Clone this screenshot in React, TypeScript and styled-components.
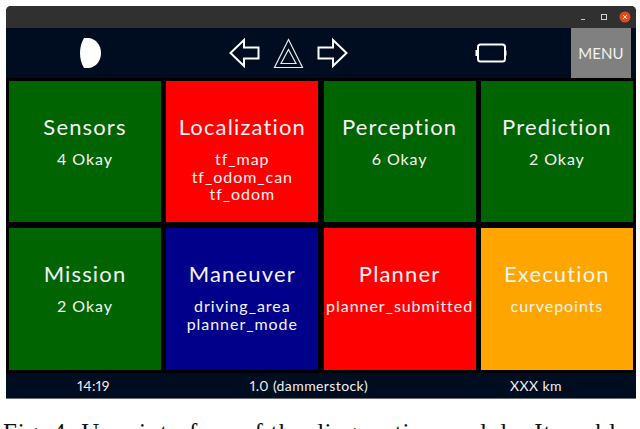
import React from 'react'
import styled, { createGlobalStyle } from 'styled-components'

const GlobalStyle = createGlobalStyle`
    html, body {
        margin: 0;
        padding: 0;
        background: #ffffff;
        overflow: hidden;
    }
`

const Page = styled.div`
    width: 640px;
    height: 429px;
    padding: 6px 4px 0 6px;
    box-sizing: border-box;
    overflow: hidden;
    font-family: 'Lato', 'Open Sans', sans-serif;
`

const Window = styled.div`
    width: 630px;
    height: 392px;
    display: flex;
    flex-direction: column;
    background: #000;
    border-radius: 5px 5px 0 0;
    border-bottom: 1px solid #6b6f78;
    overflow: hidden;
`

const TitleBar = styled.div`
    height: 22px;
    flex: none;
    display: flex;
    align-items: center;
    justify-content: flex-end;
    gap: 9px;
    padding-right: 5px;
    background: #303030;
`

const WindowControl = styled.svg`
    width: 12px;
    height: 12px;
    display: block;
`

const Header = styled.div`
    height: 50px;
    flex: none;
    display: flex;
    align-items: center;
    background: #000c20;
`

const MoonSlot = styled.div`
    width: 169px;
    display: flex;
    justify-content: center;
`

const Nav = styled.div`
    width: 119px;
    margin-left: 54px;
    display: flex;
    align-items: center;
    justify-content: space-between;
`

const BatterySlot = styled.div`
    width: 38px;
    margin-left: 124px;
    display: flex;
    justify-content: center;
`

const MenuButton = styled.div`
    width: 60px;
    height: 50px;
    margin-left: 61px;
    display: flex;
    align-items: center;
    justify-content: center;
    background: #808080;
    color: #f2f2f2;
    font-size: 15px;
    letter-spacing: 0.1px;
`

const Grid = styled.div`
    flex: 1;
    display: grid;
    grid-template-columns: repeat(4, 152px);
    grid-template-rows: 141px 142px;
    column-gap: 5.3px;
    row-gap: 6px;
    padding: 3px 0 0 3px;
`

const Card = styled.div<{ $bg: string }>`
    display: flex;
    flex-direction: column;
    align-items: center;
    padding-top: 31px;
    box-sizing: border-box;
    background: ${(props) => props.$bg};
    color: #f4f4f4;
    text-align: center;
    white-space: nowrap;
`

const CardTitle = styled.div`
    font-size: 22px;
    line-height: 30px;
    letter-spacing: 1.15px;
`

const CardLines = styled.div`
    margin-top: 8px;
    font-size: 16px;
    line-height: 17.5px;
    letter-spacing: 0.95px;
`

const Footer = styled.div`
    height: 25px;
    flex: none;
    display: flex;
    align-items: center;
    background: #000c20;
    color: #f0f0f0;
    font-size: 14px;
    letter-spacing: 0.4px;
    font-variant-numeric: proportional-nums;
`

const FooterItem = styled.div<{ $width: number }>`
    width: ${(props) => props.$width}px;
    flex: none;
    text-align: center;
    white-space: nowrap;
`

const Caption = styled.div`
    margin: 22px 0 0 -3px;
    font-family: 'Liberation Serif', serif;
    font-size: 25px;
    line-height: 24px;
    letter-spacing: 0.85px;
    color: #111;
    white-space: nowrap;
`

const cards = [
    { title: 'Sensors', lines: ['4 Okay'], color: '#006400' },
    { title: 'Localization', lines: ['tf_map', 'tf_odom_can', 'tf_odom'], color: '#ff0000' },
    { title: 'Perception', lines: ['6 Okay'], color: '#006400' },
    { title: 'Prediction', lines: ['2 Okay'], color: '#006400' },
    { title: 'Mission', lines: ['2 Okay'], color: '#006400' },
    { title: 'Maneuver', lines: ['driving_area', 'planner_mode'], color: '#00008b' },
    { title: 'Planner', lines: ['planner_submitted'], color: '#ff0000' },
    { title: 'Execution', lines: ['curvepoints'], color: '#ffa500' },
]

const App = () => {
    return (
        <Page>
            <GlobalStyle />
            <Window>
                <TitleBar>
                    <WindowControl viewBox="0 0 12 12">
                        <path d="M4 8.5h4" stroke="#c8c8c8" strokeWidth="1" />
                    </WindowControl>
                    <WindowControl viewBox="0 0 12 12">
                        <rect x="3.5" y="3.5" width="5" height="5" fill="none" stroke="#d0d0d0" strokeWidth="1" />
                    </WindowControl>
                    <WindowControl viewBox="0 0 12 12">
                        <circle cx="6" cy="6" r="5.5" fill="#df4a21" />
                        <path d="M4 4l4 4M8 4l-4 4" stroke="#f6d8cc" strokeWidth="1" />
                    </WindowControl>
                </TitleBar>
                <Header>
                    <MoonSlot>
                        <svg width="22" height="32" viewBox="0 0 22 32">
                            <path d="M4 1h5c7 1 12 7 12 15s-5 14-12 15H4C1 26 0 21 0 16S1 6 4 1z" fill="#fff" />
                        </svg>
                    </MoonSlot>
                    <Nav>
                        <svg width="31" height="30" viewBox="0 0 31 30">
                            <path d="M1.500 15L15 2v7.500h14.500v11H15V28z" fill="none" stroke="#fff" strokeWidth="2" />
                        </svg>
                        <svg width="31" height="31" viewBox="0 0 31 31">
                            <path d="M15.500 1.500L29.500 29.500H1.500z" fill="none" stroke="#e8e8e8" strokeWidth="1.200" />
                            <path d="M15.500 11.500L23 25.500H8z" fill="none" stroke="#e8e8e8" strokeWidth="1.200" />
                        </svg>
                        <svg width="31" height="30" viewBox="0 0 31 30">
                            <path d="M29.500 15L16 2v7.500H1.500v11H16V28z" fill="none" stroke="#fff" strokeWidth="2" />
                        </svg>
                    </Nav>
                    <BatterySlot>
                        <svg width="32" height="20" viewBox="0 0 32 20">
                            <rect x="3" y="1.500" width="27" height="17" rx="2.500" fill="none" stroke="#fff" strokeWidth="2" />
                            <rect x="0.500" y="7" width="2" height="6" fill="#fff" />
                            <rect x="30" y="7.500" width="1.500" height="5" fill="#fff" />
                        </svg>
                    </BatterySlot>
                    <MenuButton>MENU</MenuButton>
                </Header>
                <Grid>
                    {cards.map(({ title, lines, color }) => (
                        <Card key={title} $bg={color}>
                            <CardTitle>{title}</CardTitle>
                            <CardLines>
                                {lines.map((line) => (
                                    <div key={line}>{line}</div>
                                ))}
                            </CardLines>
                        </Card>
                    ))}
                </Grid>
                <Footer>
                    <FooterItem $width={175}>14:19</FooterItem>
                    <FooterItem $width={256}>1.0 (dammerstock)</FooterItem>
                    <FooterItem $width={198}>XXX km</FooterItem>
                </Footer>
            </Window>
            <Caption>Fig. 4: User interface of the diagnostics module. It enables</Caption>
        </Page>
    )
}

export default App
